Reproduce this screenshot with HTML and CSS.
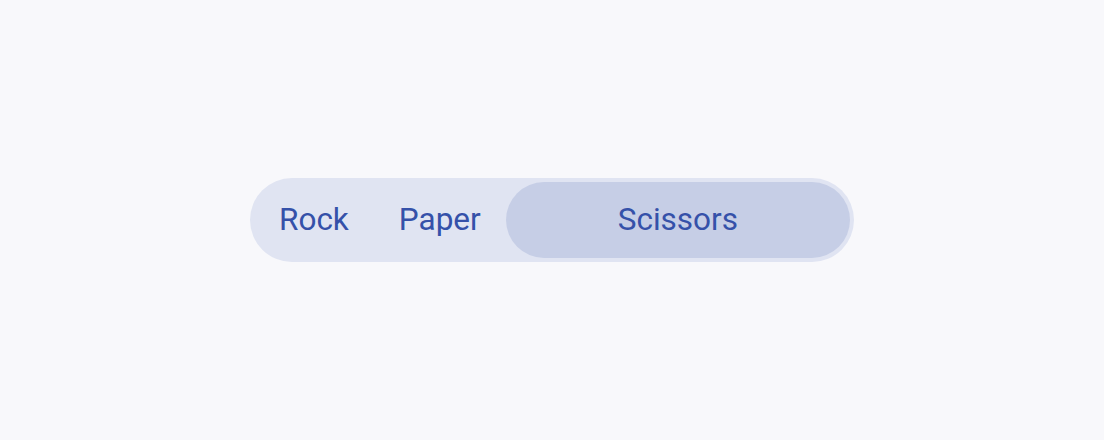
FILE: index.html
```html
<!DOCTYPE html>
<html lang="en">
<head>
  <meta charset="UTF-8" />
  <meta name="viewport" content="width=device-width, initial-scale=1.0" />
  <title>Segmented control</title>
  <link rel="stylesheet" href="styles.css">
</head>
<body>
  <div class="segmented">
    <button class="segment">Rock</button>
    <button class="segment">Paper</button>
    <button class="segment selected">Scissors</button>
  </div>
</body>
</html>
```

FILE: styles.css
```css
html, body {
  height: 100%;
}

body {
  margin: 0;
  font-family: Roboto, "Liberation Sans", sans-serif;
  background-color: #f8f8fb;
  display: flex;
  justify-content: center;
  align-items: center;
}

.segmented {
  display: flex;
  width: 604px;
  box-sizing: border-box;
  padding: 4px;
  background-color: #e0e4f2;
  border-radius: 42px;
}

.segment {
  border: none;
  background: none;
  font-family: inherit;
  font-size: 31.5px;
  color: #3551a9;
  padding: 0 25px 2px;
  height: 76px;
  border-radius: 38px;
  cursor: pointer;
}

.segment.selected {
  flex: 1;
  background-color: #c6cee6;
}
```
